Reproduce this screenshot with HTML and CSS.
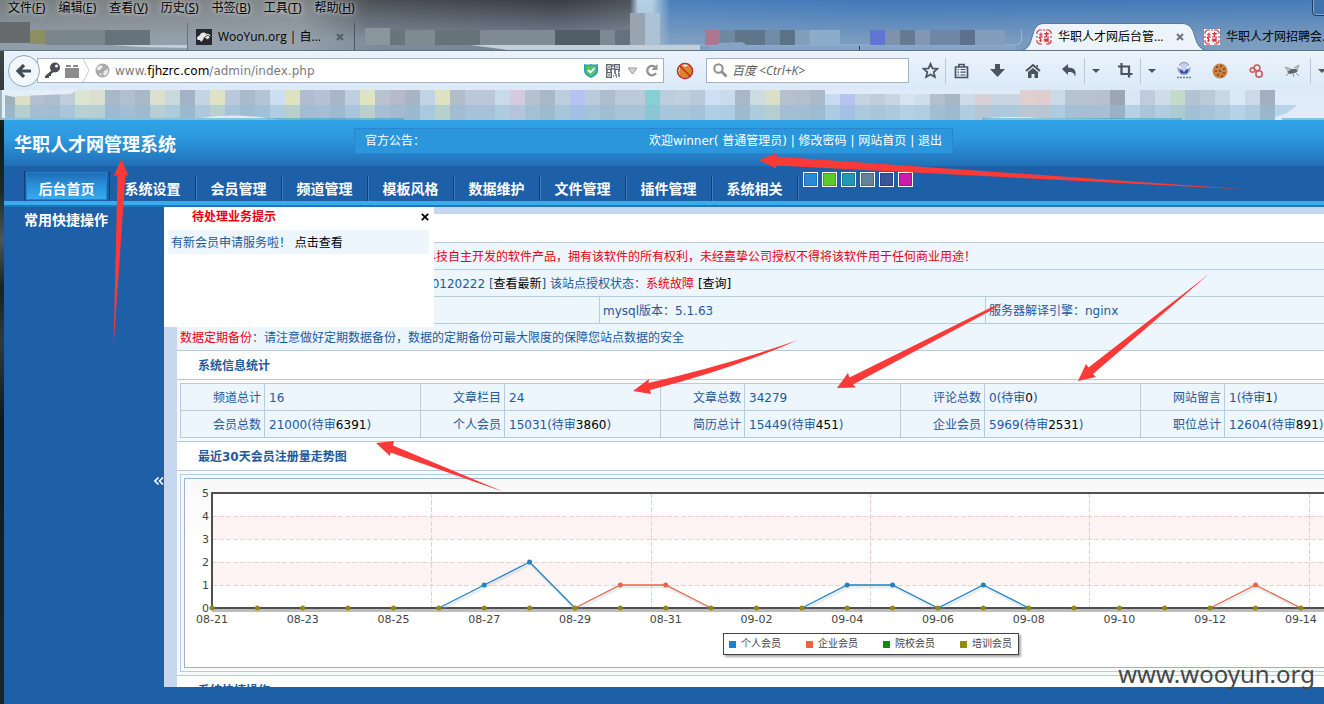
FILE: index.html
```html
<!DOCTYPE html>
<html lang="zh-CN">
<head>
<meta charset="utf-8">
<title>华职人才网后台管理</title>
<link rel="stylesheet" href="styles.css">
</head>
<body>
<div class="desktop">
<div class="window">
  <div class="chrome-top">
    <svg class="tab-mosaic" id="tabMosaic" aria-hidden="true"></svg>
    <nav class="menubar">
      <a href="#">文件(<u>F</u>)</a><a href="#">编辑(<u>E</u>)</a><a href="#">查看(<u>V</u>)</a><a href="#">历史(<u>S</u>)</a><a href="#">书签(<u>B</u>)</a><a href="#">工具(<u>T</u>)</a><a href="#">帮助(<u>H</u>)</a>
    </nav>
    <div class="win-button" aria-hidden="true"></div>
    <div class="tabs">
      <div class="tab tab-first">
        <svg width="16" height="16" viewBox="0 0 16 16"><rect width="16" height="16" fill="#25282c"/><path d="M1 10c0-3 2-3 3-4 1-3 5-3 6-1 3-1 5 1 4 3s-2 2-3 2l-3-2-1 3-2 2-1-2H2z" fill="#e8e8e8"/><path d="M9 8l3-2 2 2-2 3-2-1" fill="none" stroke="#444"/></svg>
        <span class="tab-title">WooYun.org | 自...</span>
        <button class="tab-close" aria-label="关闭"><svg width="8" height="8" viewBox="0 0 8 8"><path d="M1 1l6 6M7 1L1 7" stroke="#555d66" stroke-width="2"/></svg></button>
      </div>
      <div class="tab tab-active">
        <svg class="tab-shape" width="192" height="29" viewBox="0 0 192 29" aria-hidden="true"><path d="M0 28.500C12 27 12 20 15 11C17 4 20 .5 26 .5H164C170 .5 174 4 176 11C179 20 180 27 192 28.500V29H0Z" fill="#edf4fc"/><path d="M0 28C12 27 12 20 15 11C17 4 20 .5 26 .5H164C170 .5 174 4 176 11C179 20 180 27 192 28" fill="none" stroke="#56789f"/></svg>
        <svg class="seal" width="16" height="16" viewBox="0 0 16 16"><use href="#seal"/></svg>
        <span class="tab-title">华职人才网后台管...</span>
        <button class="tab-close" aria-label="关闭"><svg width="8" height="8" viewBox="0 0 8 8"><path d="M1 1l6 6M7 1L1 7" stroke="#6d747c" stroke-width="2"/></svg></button>
      </div>
      <div class="tab tab-last">
        <svg width="16" height="16" viewBox="0 0 16 16"><rect width="16" height="16" fill="#fff"/><use href="#seal"/></svg>
        <span class="tab-title">华职人才网招聘会...</span>
      </div>
    </div>
  </div>

  <svg width="0" height="0" class="defs" aria-hidden="true"><defs>
    <g id="seal" fill="none" stroke="#d8323a" stroke-width="1.100"><path d="M1 5V3L3 1h3M10 1h3l2 2v2M15 11v2l-2 2h-3M6 15H3l-2-2v-2M1 7v2M15 7v2M7 1h2"/><path d="M3 5.500h3.500M5 3.500v4L3 9.500M3 8h4M4.500 9v4M3 12l3-1M8 4.500h5M10.500 3v5M8 8h5M9 6l3-1M8.500 13l4-4M8.500 9.500l4.500 4M7.500 11h6"/></g>
  </defs></svg>

  <div class="toolbar">
    <div class="urlbar">
      <button class="back" aria-label="后退"><svg width="16" height="14" viewBox="0 0 16 14"><path d="M8 1L2 7l6 6M2 7h13" fill="none" stroke="#434b54" stroke-width="3.200"/></svg></button>
      <svg class="key" width="17" height="17" viewBox="0 0 17 17"><circle cx="11" cy="5.500" r="5" fill="#4a4e54"/><path d="M8 8l-7 6v2h4v-2h2v-2l4-3" fill="#4a4e54"/><circle cx="12.500" cy="4" r="1.500" fill="#fff"/></svg>
      <svg class="brick" width="14" height="14" viewBox="0 0 14 14"><path d="M0 4h14v10H0zM1 1h5v2H1zM8 1h5v2H8z" fill="#8c8c8c"/></svg>
      <svg class="chevron" width="8" height="23" viewBox="0 0 8 23"><path d="M1 0l6 11.500L1 23" fill="none" stroke="#c5ccd4"/></svg>
      <svg class="globe" width="15" height="15" viewBox="0 0 15 15"><circle cx="7.500" cy="7.500" r="7" fill="#aaa"/><path d="M2 4l4-2 2 2-3 3H2M9 8l4-2v4l-3 3-2-2M6 10l1 3-3-2" fill="#e8e8e8"/></svg>
      <div class="address">www.<b>fjhzrc.com</b>/admin/index.php</div>
      <svg width="14" height="15" viewBox="0 0 14 15"><path d="M0 1q4 1 7 0q3 1 7 0v7q0 4-7 7q-7-3-7-7z" fill="#2f9fc0"/><path d="M2 3h10v5q0 3-5 5q-5-2-5-5z" fill="#58c267"/><path d="M4 7l2.500 2.500L10.500 5" fill="none" stroke="#fff" stroke-width="1.800"/></svg>
      <svg class="qr" width="14" height="14" viewBox="0 0 14 14"><path d="M.7.700h4.600v4.600H.7zM8.700.700h4.600v4.600H8.700zM.7 8.700h4.600v4.600H.7z" fill="none" stroke="#59636e" stroke-width="1.300"/><path d="M2.300 2.300h1.500v1.500H2.300zM10.300 2.300h1.500v1.500h-1.500zM2.300 10.300h1.500v1.500H2.300z" fill="#59636e"/><path d="M7 0v3M7 4v2M0 7h2M4 7h2M8 7h2M12 7h2M8 9h2M12 9h1M9 11h2M7 12h1M10 13h1M12 12h2M13 9v2" stroke="#59636e" stroke-width="1.300"/></svg>
      <svg class="drop" width="11" height="8" viewBox="0 0 11 8"><path d="M1 1h9L5.500 7z" fill="#d4d4d4" stroke="#9b9b9b"/></svg>
      <button class="plain" aria-label="刷新"><svg width="13" height="13" viewBox="0 0 13 13"><path d="M10 3A4.700 4.700 0 1 0 11 9" fill="none" stroke="#929292" stroke-width="2.300"/><path d="M12.500 0v6h-6z" fill="#929292"/></svg></button>
    </div>
    <button class="plain noscript" aria-label="禁止"><svg width="18" height="18" viewBox="0 0 18 18"><path d="M4 6l2-3 3 2 4-2 2 3 1 4-2 5-5 1-5-2-1-4z" fill="#d98628"/><circle cx="9" cy="9" r="7.500" fill="none" stroke="#c32b22" stroke-width="1.600"/><path d="M4 4l10 10" stroke="#c32b22" stroke-width="1.600"/></svg></button>
    <div class="searchbox">
      <svg width="15" height="15" viewBox="0 0 15 15"><circle cx="5.500" cy="5.500" r="4.200" fill="none" stroke="#8f8f8f" stroke-width="2"/><path d="M8.500 8.500l5 5" stroke="#8f8f8f" stroke-width="2.600"/></svg>
      <input class="search" type="text" placeholder="百度 &lt;Ctrl+K&gt;" aria-label="搜索">
    </div>
    <div class="tools">
      <button class="tool narrow" aria-label="收藏"><svg width="17" height="17" viewBox="0 0 17 17"><path d="M8.500 1.800l2 4.600 5 .4-3.800 3.300 1.200 4.900-4.400-2.600L4.100 15l1.200-4.900L1.500 6.800l5-.4z" fill="none" stroke="#4b535c" stroke-width="1.700"/></svg></button>
      <i class="sep"></i>
      <button class="tool narrow" aria-label="书签列表"><svg width="15" height="16" viewBox="0 0 15 16"><path d="M5 3.500V1.500h5v2M1.500 4h12v10.500h-12z" fill="none" stroke="#4b535c" stroke-width="1.700"/><path d="M3.500 6.500h1.500M6.500 6.500h5M3.500 9.200h1.500M6.500 9.200h5M3.500 12h1.500M6.500 12h5" stroke="#4b535c" stroke-width="1.200"/></svg></button>
      <button class="tool group" aria-label="下载"><svg width="15" height="15" viewBox="0 0 15 15"><path d="M5 1h5v5h5l-7.500 8L0 6h5z" fill="#4b535c"/></svg></button>
      <button class="tool" aria-label="主页"><svg width="16" height="15" viewBox="0 0 16 15"><path d="M1 8l7-6 7 6" fill="none" stroke="#4b535c" stroke-width="2"/><path d="M3 9l5-4 5 4v6H9.500v-4h-3v4H3zM11 2h2v3z" fill="#4b535c"/></svg></button>
      <button class="tool narrow group" aria-label="撤销"><svg width="15" height="14" viewBox="0 0 15 14"><path d="M0 5l6-5v3.500c6 0 9 3 7 9-1-4-3-4.500-7-4.500v3z" fill="#4b535c"/></svg></button>
      <i class="sep"></i>
      <button class="tool caret" aria-label="更多"><svg width="8" height="4" viewBox="0 0 8 4"><path d="M0 0h8L4 4z" fill="#4b535c"/></svg></button>
      <button class="tool narrow group" aria-label="截图"><svg width="15" height="15" viewBox="0 0 15 15"><path d="M3.500 0v11h11M0 3.500h11v11" fill="none" stroke="#4b535c" stroke-width="2.200"/></svg></button>
      <i class="sep"></i>
      <button class="tool caret" aria-label="更多"><svg width="8" height="4" viewBox="0 0 8 4"><path d="M0 0h8L4 4z" fill="#4b535c"/></svg></button>
      <button class="tool group" aria-label="代理"><svg width="16" height="17" viewBox="0 0 16 17"><circle cx="8" cy="6.500" r="6" fill="#c6d0ea" stroke="#7d8fc0"/><path d="M3 7l3 1 2 2 3-3 2 .5-2 4H5z" fill="#3450a6"/><path d="M1 3l4 3M15 3l-4 3" stroke="#fff" stroke-width="1.500"/><path d="M1 15.500h14" stroke="#6d7785" stroke-width="1.500" stroke-dasharray="2 1"/></svg></button>
      <button class="tool" aria-label="Cookie"><svg width="16" height="16" viewBox="0 0 16 16"><circle cx="8" cy="8" r="7.500" fill="#c98242"/><g fill="#70401d"><circle cx="5" cy="4" r="1"/><circle cx="9" cy="3" r="1"/><circle cx="12" cy="6" r="1"/><circle cx="4" cy="8" r="1"/><circle cx="8" cy="8" r="1"/><circle cx="12" cy="10" r="1"/><circle cx="6" cy="12" r="1"/><circle cx="10" cy="13" r="1"/></g></svg></button>
      <button class="tool" aria-label="扩展"><svg width="15" height="14" viewBox="0 0 15 14"><g fill="none" stroke="#d0555a" stroke-width="1.500"><circle cx="8" cy="3.800" r="2.900"/><circle cx="3.500" cy="6" r="2.300"/><circle cx="10" cy="10" r="3.200"/></g></svg></button>
      <button class="tool" aria-label="调试"><svg width="17" height="14" viewBox="0 0 17 14"><path d="M7 5L1 3l3 4M10 4l5-3-2 5" fill="#c4cccd" stroke="#98a1a2"/><path d="M3 8l4-3 5 0 2 2-3 2-5 1z" fill="#60686c"/><path d="M5 9l-3 3M9 10l1 3M12 9l3 3" stroke="#85908f" fill="none"/></svg></button>
      <i class="sep"></i>
      <button class="tool caret" aria-label="更多"><svg width="8" height="4" viewBox="0 0 8 4"><path d="M0 0h8L4 4z" fill="#4b535c"/></svg></button>
    </div>
  </div>
  <div class="bookmarks"><svg id="bookmarkMosaic" width="1324" height="30" aria-hidden="true"></svg></div>

  <header class="site-header">
    <h1 class="brand">华职人才网管理系统</h1>
    <div class="notice">
      <span>官方公告：</span>
      <span class="account">欢迎winner( 普通管理员) | <a href="#">修改密码</a> | <a href="#">网站首页</a> | <a href="#">退出</a></span>
    </div>
  </header>
  <nav class="site-nav">
    <a class="nav-item current" href="#"><span>后台首页</span></a>
    <a class="nav-item" href="#">系统设置</a>
    <a class="nav-item" href="#">会员管理</a>
    <a class="nav-item" href="#">频道管理</a>
    <a class="nav-item" href="#">模板风格</a>
    <a class="nav-item" href="#">数据维护</a>
    <a class="nav-item" href="#">文件管理</a>
    <a class="nav-item" href="#">插件管理</a>
    <a class="nav-item" href="#">系统相关</a>
    <div class="swatches">
      <button class="swatch blue" aria-label="蓝色"></button><button class="swatch green" aria-label="绿色"></button><button class="swatch teal" aria-label="青色"></button><button class="swatch gray" aria-label="灰色"></button><button class="swatch navy" aria-label="深蓝"></button><button class="swatch pink" aria-label="粉色"></button>
    </div>
  </nav>

  <div class="workspace">
    <aside class="sidebar">
      <h2>常用快捷操作</h2>
      <button class="collapse" aria-label="收起"><svg width="10" height="8" viewBox="0 0 10 8"><path d="M4.500.5L1 4l3.500 3.500M9 .5L5.500 4 9 7.500" fill="none" stroke="#fff" stroke-width="1.600"/></svg></button>
    </aside>
    <main class="content">
      <section class="popup">
        <div class="popup-head"><h3>待处理业务提示</h3><button class="popup-close" aria-label="关闭"><svg width="8" height="8" viewBox="0 0 8 8"><path d="M.8.800l6.400 6.400M7.200.800L.8 7.200" stroke="#000" stroke-width="1.800"/></svg></button></div>
        <p class="popup-row">有新会员申请服务啦！ <a href="#">点击查看</a></p>
      </section>
      <div class="sheet">
        <div class="section-title"></div>
        <div class="info after-popup red">科技自主开发的软件产品，拥有该软件的所有权利，未经嘉挚公司授权不得将该软件用于任何商业用途！</div>
        <div class="info after-popup">20120222 [<a href="#">查看最新</a>] 该站点授权状态：<span class="red">系统故障</span> <a href="#">[查询]</a></div>
        <div class="info split"><span></span><span>mysql版本：5.1.63</span><span>服务器解译引擎：nginx</span></div>
        <div class="info"><span class="red">数据定期备份</span>：请注意做好定期数据备份，数据的定期备份可最大限度的保障您站点数据的安全</div>
        <h3 class="section-title">系统信息统计</h3>
        <div class="stats-wrap">
          <table class="stats">
            <tr><th>频道总计</th><td>16</td><th>文章栏目</th><td>24</td><th>文章总数</th><td>34279</td><th>评论总数</th><td>0(待审<a href="#">0</a>)</td><th>网站留言</th><td>1(待审<a href="#">1</a>)</td></tr>
            <tr><th>会员总数</th><td>21000(待审<a href="#">6391</a>)</td><th>个人会员</th><td>15031(待审<a href="#">3860</a>)</td><th>简历总计</th><td>15449(待审<a href="#">451</a>)</td><th>企业会员</th><td>5969(待审<a href="#">2531</a>)</td><th>职位总计</th><td>12604(待审<a href="#">891</a>)</td></tr>
          </table>
        </div>
        <h3 class="section-title">最近30天会员注册量走势图</h3>
        <div class="chart-wrap"><div class="chart-frame"><div class="chart-box">
          <svg id="chart" class="chart" role="img" aria-label="最近30天会员注册量"></svg>
          <ul class="legend"><li class="k1">个人会员</li><li class="k2">企业会员</li><li class="k3">院校会员</li><li class="k4">培训会员</li></ul>
        </div></div></div>
        <h3 class="section-title">系统快捷操作</h3>
      </div>
    </main>
  </div>
  <footer class="site-footer"></footer>
</div>
<svg class="arrows" width="1324" height="704" viewBox="0 0 1324 704" aria-hidden="true"><g fill="#fb3936">
  <path d="M121.500 159L128.500 176 125.500 175 113.500 348 117.500 175 113.500 176Z"/>
  <path d="M759 160L777 153 776 156.500 1248 189.500 776 165.500 776 168.500Z"/>
  <path d="M633 391L649 379 648.500 383Q730 364 798 340Q730 370 650 390L651 394Z"/>
  <path d="M837 388L848 373 849.500 377.500 990 308 1003 303 990 311 853 384.500 856 387.500Z"/>
  <path d="M1078 381L1086 364 1088.500 367.500 1209 274 1093 374 1096 377Z"/>
  <path d="M376 443L394 441 393 445.500 504 492 390.500 452.500 390 456Z"/>
</g></svg>
<div class="watermark">www.wooyun.org</div>
</div>
<script src="app.js"></script>
</body>
</html>
```
FILE: styles.css
```css
* { box-sizing: border-box; }
html, body { height: 100%; margin: 0; overflow: hidden; }
body {
  font: 12px/16px "DejaVu Sans", "Noto Sans CJK TC", "Noto Sans CJK SC", sans-serif;
  color: #23599c;
}
button { border: 0; padding: 0; background: none; font: inherit; }
a { color: #000; text-decoration: none; }
h1, h2, h3, p, ul { margin: 0; padding: 0; }
svg { flex: none; display: block; }
.defs { position: absolute; }
.red { color: #ee0010; }

.desktop {
  position: relative;
  height: 100vh;
  padding-left: 4px;
  overflow: hidden;
  background: linear-gradient(#4d5658 0, #333b3c 90px, #101b1a 130px, #1b2a22 190px, #4c5558 240px, #14231a 290px, #343a3d 340px, #10191c 420px, #1c2429);
}
.window { display: flex; flex-direction: column; height: 100%; }

/* browser frame */
.chrome-top {
  position: relative;
  flex: none;
  height: 51px;
  margin-left: -4px;
  overflow: hidden;
  border-bottom: 1px solid #5f7486;
  background:
    linear-gradient(rgba(160,178,196,0), rgba(160,178,196,.6) 80%),
    linear-gradient(90deg, #787e81 0, #85898b 300px, #4c5157 370px, #383d45 560px, #4d5158 630px, #b5d0e4 638px, #b5d0e4 652px, #4a80bc 670px, #3f78b8 900px, #447bb8 1324px);
}
.tab-mosaic { position: absolute; left: 0; top: 0; width: 100%; height: 50px; }
.menubar {
  position: relative;
  display: flex;
  gap: 13px;
  height: 16px;
  padding-left: 8px;
  font-family: "Noto Sans", "Noto Sans CJK SC", sans-serif;
}
.menubar a { text-shadow: 0 0 5px #fff; }
.win-button {
  position: absolute;
  right: -8px;
  top: -4px;
  width: 20px;
  height: 20px;
  border: 1px solid #1d3d66;
  border-radius: 4px;
  background: #3f74ad;
  box-shadow: inset 0 0 0 1px #7fa8d3;
}
.tabs {
  position: relative;
  display: flex;
  height: 28px;
  margin-top: 7px;
  font-family: "Open Sans", "Noto Sans CJK SC", sans-serif;
  color: #000;
}
.tab { position: relative; display: flex; align-items: center; flex: none; gap: 6px; white-space: nowrap; }
.tab svg, .tab span, .tab button { position: relative; }
.tab-close { padding: 4px; }
.tab-first { width: 168px; margin-left: 187px; padding-left: 8px; border-right: 1px solid #4d565e; border-left: 1px solid #69737b; }
.tab-first .tab-close { margin-left: auto; padding-right: 10px; }
.tab-active { width: 148px; margin-left: 681px; }
.tab-active .tab-close { margin-left: auto; padding-right: 0; }
.tab .tab-shape { position: absolute; left: -18px; top: 0; }
.tab-last { margin-left: 20px; }

.toolbar {
  display: flex;
  align-items: center;
  flex: none;
  height: 39px;
  background: linear-gradient(#ebf3fc, #dbe9f8);
}
.urlbar {
  position: relative;
  display: flex;
  align-items: center;
  flex: 0 0 627px;
  height: 25px;
  margin-left: 33px;
  padding: 0 5px 0 6px;
  border: 1px solid #a2b3c6;
  background: #fff;
}
.back {
  position: absolute;
  left: -30px;
  top: -4px;
  display: flex;
  align-items: center;
  justify-content: center;
  width: 32px;
  height: 32px;
  border: 1px solid #93a5b8;
  border-radius: 50%;
  background: #f2f7fd;
}
.brick { margin-left: 4px; }
.chevron { margin: 0 5px 0 3px; }
.address {
  flex: 1;
  margin-left: 5px;
  font: 12px/18px "DejaVu Sans", sans-serif;
  color: #7c7c7c;
}
.address b { font-weight: 400; color: #000; }
.qr { margin-left: 8px; }
.drop { margin: 0 7px; }
.noscript { margin: 0 12px; }
.searchbox {
  display: flex;
  align-items: center;
  flex: 0 0 203px;
  height: 25px;
  padding-left: 6px;
  border: 1px solid #a2b3c6;
  background: #fff;
}
.search {
  width: 170px;
  border: 0;
  padding: 0 0 0 4px;
  background: none;
  outline: 0;
  font: italic 12px/18px "DejaVu Sans", "Noto Sans CJK SC", sans-serif;
  font-family: "Open Sans", "Noto Sans CJK SC", sans-serif;
}
.search::placeholder { color: #5c5c5c; opacity: 1; }
.tools { display: flex; align-items: center; margin-left: 6px; }
.tool { display: flex; align-items: center; justify-content: center; flex: none; width: 36px; height: 28px; }
.tool.narrow { width: 30px; }
.tool.caret { width: 22px; }
.tool.group { margin-left: 3px; }
.sep { flex: none; width: 1px; height: 26px; background: #bac6d3; }
.bookmarks { flex: none; height: 30px; margin-left: -4px; overflow: hidden; background: #dfebf8; }

/* admin header */
.site-header {
  display: flex;
  align-items: flex-start;
  flex: none;
  height: 46px;
  padding: 8px 0 0 10px;
  background: linear-gradient(#31a4e8, #2d97dd 40%, #2270b8);
  color: #fff;
}
.brand { width: 340px; font-size: 18px; line-height: 34px; }
.notice {
  display: flex;
  justify-content: space-between;
  width: 599px;
  height: 26px;
  padding: 0 10px;
  border: 1px solid #2588cd;
  background: #2c96dc;
  line-height: 24px;
  white-space: pre;
}
.notice a { color: #fff; }
.site-nav {
  display: flex;
  align-items: flex-end;
  flex: none;
  height: 41px;
  padding-left: 20px;
  border-bottom: 2px solid #1f78bf;
  background: linear-gradient(#1d60a8 35px, #38adee 35px);
}
.nav-item {
  width: 86px;
  height: 25px;
  margin-bottom: 4px;
  border-right: 1px solid #123f78;
  box-shadow: 1px 0 #3a7cc0;
  font-size: 14px;
  font-weight: 700;
  line-height: 26px;
  text-align: center;
  color: #fff;
}
.nav-item.current { height: 30px; padding: 1px 2px 1px 1px; border-left: 1px solid #123f78; box-shadow: none; }
.current span { display: block; height: 28px; line-height: 32px; border: 1px solid #2480cb; background: linear-gradient(#1f6cb4, #2a8fda 45%, #35abee); }
.swatches { display: flex; align-self: flex-start; gap: 4px; margin: 6px 0 0 5px; }
.swatch { width: 15px; height: 15px; border: 1px solid #fff; box-shadow: inset 0 0 0 1px rgba(0,0,0,.2); }
.blue { background: #2b8cd6; }
.green { background: #59cc2c; }
.teal { background: #2398b6; }
.gray { background: #63839a; }
.navy { background: #39549b; }
.pink { background: #cb1cab; }

.workspace { display: flex; flex: 1; min-height: 0; }
.sidebar { display: flex; flex-direction: column; flex: 0 0 160px; background: #1d60a8; color: #fff; }
.sidebar h2 { padding-left: 20px; font-size: 14px; line-height: 26px; }
.collapse { align-self: flex-end; margin-top: 244px; }
.content {
  position: relative;
  flex: 1;
  min-width: 0;
  overflow: hidden;
  padding: 7px 0 0 13px;
  background: #c5d8ef;
}
.popup { position: absolute; left: 0; top: 0; z-index: 1; width: 270px; height: 120px; padding: 0 5px 0 4px; background: #fff; }
.popup-head { display: flex; justify-content: space-between; align-items: center; height: 20px; padding-left: 24px; color: #ee0010; }
.popup h3 { font-size: 12px; }
.popup-row { height: 24px; margin-top: 3px; padding: 2px 0 0 3px; line-height: 22px; background: #edf5fd; }
.sheet { min-width: 1207px; height: 100%; overflow: hidden; background: #fff; }
.section-title { height: 29px; padding: 2px 0 0 21px; border-bottom: 1px solid #b5cce0; font-size: 12px; line-height: 26px; }
.info { height: 27px; padding: 2px 0 0 3px; border-bottom: 1px solid #b5cce0; background: #edf5fd; line-height: 24px; white-space: nowrap; }
.info.after-popup { padding-left: 247px; }
.info.split { display: flex; padding: 0; }
.split span { flex: 0 0 386px; padding: 2px 0 0 3px; border-left: 1px solid #b5cce0; }
.split span:first-child { flex-basis: 422px; border: 0; }
.stats-wrap { padding: 3px; border-bottom: 1px solid #b5cce0; background: #f5fafe; }
.stats {
  width: 1201px;
  table-layout: fixed;
  border: solid #b5cce0;
  border-width: 1px 0 0 1px;
  border-spacing: 0;
  background: #edf5fd;
}
.stats th, .stats td { height: 27px; border: solid #b5cce0; border-width: 0 1px 1px 0; line-height: 24px; white-space: nowrap; }
.stats th { width: 84px; padding: 2px 3px 0 0; font-weight: 400; text-align: right; }
.stats td { width: 156px; padding: 2px 0 0 4px; }
.chart-wrap { padding: 3px; border-bottom: 1px solid #b5cce0; background: #f5fafe; }
.chart-frame { padding: 3px; border: 1px solid #b5cce0; }
.chart-box { position: relative; height: 190px; border: 1px solid #9fb4cc; background: linear-gradient(#f9f9f9, #fff 40%); }
.chart { width: 100%; height: 188px; font: 11px "DejaVu Sans", sans-serif; }
.legend {
  position: absolute;
  left: 538px;
  top: 154px;
  display: flex;
  gap: 25px;
  height: 22px;
  padding: 0 6px 0 5px;
  border: 1px solid #444;
  background: #fff;
  box-shadow: 2px 2px 2px #aaa;
  list-style: none;
  font-size: 10px;
  line-height: 20px;
  color: #444;
}
.legend li { display: flex; align-items: center; gap: 5px; }
.legend li::before { content: ""; width: 7px; height: 7px; background: currentColor; }
.legend .k1::before { color: #1f7fc9; }
.legend .k2::before { color: #ea6444; }
.legend .k3::before { color: #15890b; }
.legend .k4::before { color: #958a11; }
.site-footer { flex: none; height: 17px; background: #1d60a8; }

.arrows { position: absolute; left: 0; top: 0; z-index: 5; pointer-events: none; }
.watermark {
  position: absolute;
  right: 9px;
  bottom: 13px;
  z-index: 6;
  font: 24px/34px "Noto Sans", sans-serif;
  color: #474747;
}
```
FILE: app.js
```js
const NS = "http://www.w3.org/2000/svg";
function add(parent, name, attrs, text) {
  const el = document.createElementNS(NS, name);
  for (const key in attrs) el.setAttribute(key, attrs[key]);
  if (text) el.textContent = text;
  parent.appendChild(el);
  return el;
}

// Registrations chart
const chart = document.getElementById("chart");
const x0 = 27, y0 = 129, step = 45.37, unit = 23, right = 1200;
const px = i => x0 + i * step;
const py = v => y0 - v * unit;
add(chart, "rect", { x: x0, y: py(5), width: right, height: unit * 5, fill: "#fff" });
[4, 2].forEach(v => add(chart, "rect", { x: x0, y: py(v), width: right, height: unit, fill: "#fdf4f3" }));
[1, 2, 3, 4].forEach(v => add(chart, "path", { d: `M${x0} ${py(v) + .5}H${right}`, stroke: "#f3cfcc", "stroke-dasharray": "5 2" }));
for (let i = 1; i < 6; i++) add(chart, "path", { d: `M${Math.round(x0 + i * 219.3) + .5} ${py(5)}V${y0}`, stroke: "#f0cdca", "stroke-dasharray": "5 2" });
add(chart, "path", { d: `M${x0} ${y0 + 2.5}H${right}`, stroke: "#bdbdbd", "stroke-width": 3 });
add(chart, "path", { d: `M${right} ${py(5)}H${x0}V${y0}H${right}`, fill: "none", stroke: "#4f4f4f", "stroke-width": 2 });
for (let v = 0; v <= 5; v++) add(chart, "text", { x: 24, y: py(v) + 4, "text-anchor": "end", fill: "#444" }, String(v));
["08-21", "08-23", "08-25", "08-27", "08-29", "08-31", "09-02", "09-04", "09-06", "09-08", "09-10", "09-12", "09-14"]
  .forEach((t, i) => add(chart, "text", { x: px(i * 2), y: 144, "text-anchor": "middle", fill: "#444" }, t));
const runs = [
  ["#2482c0", [[5, 0], [6, 1], [7, 2], [8, 0]]],
  ["#e4694c", [[8, 0], [9, 1], [10, 1], [11, 0]]],
  ["#2482c0", [[13, 0], [14, 1], [15, 1], [16, 0], [17, 1], [18, 0]]],
  ["#e4694c", [[22, 0], [23, 1], [24, 0]]]
];
runs.forEach(([color, pts]) => {
  const line = pts.map(([i, v]) => `${px(i)},${py(v)}`).join(" ");
  add(chart, "polyline", { points: line, fill: "none", stroke: "#8ab", "stroke-opacity": .2, "stroke-width": 3, transform: "translate(1 2)" });
  add(chart, "polyline", { points: line, fill: "none", stroke: color, "stroke-width": 1.3 });
  pts.filter(p => p[1]).forEach(([i, v]) => add(chart, "circle", { cx: px(i), cy: py(v), r: 2.5, fill: color }));
});
for (let i = 0; i < 26; i++) add(chart, "circle", { cx: px(i), cy: y0, r: 2.5, fill: "#958a11" });

// Bookmark bar blocks, 15px each
const marks = "9fb0bb dcdfc6 b3bfcd aebccb bfcddb dbe6d0 dadfd0 a9b8c8 b1bfcf a9b7c6 dcdfcc c9d8dc a3b3c5 c6d5e2 dfe3c4 b9c9d9 a9bacb b5c4d4 cbdff0 dfe3bd b0bdce b7c1d3 a9b6c7 c0cfe0 dfe3c0 b9c3d0 b5b9c8 a9b4c4 c0d4e6 dfe2be b3bcca bcc7d8 bcc7d8 c9dbe8 d6cbdd b6c2cf a9b8c6 bccdde b6c1f4 b9cbdc aebccb bcc9d8 bcc9d8 86cfd2 bccede c0d0dd b9c9d9 cfdff3 c9dcee a9b7c7 cbdbe0 dbdfc8 b6c0cf b3bfcd adb9c7 c6dbf0 b6c3f1 c6d4e2 c0ccd8 c9d5e0 d6e4f0 d0deea b3bfcb a9b7c5 cfdbe7 d9d0d3 c9d6e2 c9d6e2 e0cfcf e0cdcd ccd9e6 b6c3d0 b9c3d0 b9c0cf 9ca6b4 d9e6f3 c0ccdb d0dce8 c3dbc9 b3c3d3 bcc9d6 c9d6e3 dbe8f6 ccd9e6 a3afbf".split(" ");
const bar = document.getElementById("bookmarkMosaic");
marks.forEach((c, i) => add(bar, "rect", { x: i * 15, y: i > 54 && i < 68 ? 4 : 0, width: 15, height: 30, fill: "#" + c }));
add(bar, "path", { d: "M5 15H1297L1287 23L1275 27V30H5Z", fill: "#91bdd8", "fill-opacity": .5 });
add(bar, "path", { d: "M0 0H78L70 4L20 6L14 7L5 5V28H2V0Z", fill: "#e5effa" });
add(bar, "path", { d: "M4 30V28H200Q235 22 280 30ZM980 30Q995 25 1040 28L1180 30Z", fill: "#dfebf8" });
add(bar, "path", { d: "M4 29H404M982 29H1182M1282 29H1324", stroke: "#2b9ccc" });

// Tab strip blocks: x, y, width, height, colour
const tabBlocks = [
  [0, 22, 30, 21, "676b6e"], [30, 30, 15, 14, "8b8f62"], [45, 30, 60, 15, "7b858c"], [105, 30, 45, 15, "67727a"],
  [365, 28, 25, 17, "8a959e"], [390, 30, 15, 15, "69747c"], [405, 30, 30, 15, "7f8a92"], [435, 30, 45, 15, "67727a"],
  [480, 30, 75, 15, "7f8a92"], [555, 30, 45, 15, "535d66"], [600, 30, 15, 15, "7d8892"], [615, 30, 15, 15, "66717b"],
  [630, 13, 15, 32, "98a5b1"], [645, 13, 15, 32, "acc1d3"], [705, 30, 15, 15, "a9788f"], [720, 30, 15, 15, "7089a2"],
  [735, 30, 30, 15, "5f7589"], [765, 30, 15, 15, "6f8ba5"], [780, 30, 15, 15, "5c7287"], [795, 30, 15, 15, "7f9fbb"],
  [810, 30, 30, 15, "8badcb"], [870, 30, 15, 15, "6175d3"], [885, 30, 15, 15, "7e93ab"], [900, 30, 15, 15, "667b92"],
  [915, 30, 15, 15, "8297b4"], [930, 30, 30, 15, "7086a5"], [960, 30, 15, 15, "5d718c"], [975, 30, 30, 15, "839dbd"]
];
const strip = document.getElementById("tabMosaic");
add(strip, "path", { d: "M500 45H1016Q1024 45 1021 30", fill: "none", stroke: "#9fb8d6" });
add(strip, "path", { d: "M112 45H187V48L140 47ZM470 45H700V50H508Z", fill: "#c2ced9" });
tabBlocks.forEach(([x, y, width, height, c]) => add(strip, "rect", { x, y, width, height, fill: "#" + c }));
add(strip, "path", { d: "M705 50L720 43L742 42L748 46H1016V50Z", fill: "#86a4c6" });
add(strip, "path", { d: "M859.500 46V50", stroke: "#26394d" });
```
